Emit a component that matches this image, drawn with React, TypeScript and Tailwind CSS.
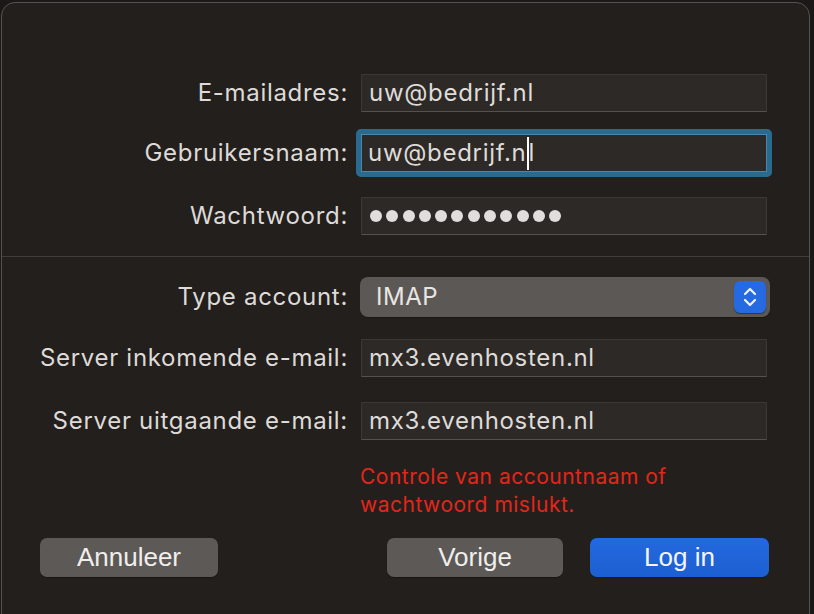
import React from 'react';

const font = { fontFamily: 'Inter, "Noto Sans", sans-serif' };

function Field({ children, focused }: { children: React.ReactNode; focused?: boolean }) {
  if (focused) {
    return (
      <div className="ml-[1px] rounded-[5px] bg-[#2b6a8f] p-[5px]">
        <div className="flex h-[38px] w-[406px] items-center border border-[#4f86a6] bg-[#2d2926] pl-[6px] text-[24px] tracking-[0.7px] text-[#dedbd8]">
          {children}
        </div>
      </div>
    );
  }
  return (
    <div className="ml-[13px] flex h-[38px] w-[406px] items-center border border-[#3b3734] border-b-[#55514d] bg-[#2d2926] pl-[7px] text-[24px] tracking-[0.7px] text-[#dedbd8]">
      {children}
    </div>
  );
}

function Row({ label, children, focused }: { label: string; children: React.ReactNode; focused?: boolean }) {
  return (
    <div className="flex items-center">
      <div className={`w-[346px] text-right text-[24px] tracking-[0.7px] text-[#dddad7] ${focused ? 'mr-[7px]' : ''}`}>{label}</div>
      {children}
    </div>
  );
}

export default function App() {
  return (
    <div className="h-[614px] w-[814px] overflow-hidden bg-[#1b1917] pl-[1px] pr-[4px] pt-[2px]" style={font}>
      <div className="flex h-[640px] flex-col rounded-[14px] border border-[#55524f] bg-[#231f1c]">
        <div className="flex flex-col pt-[71px]">
          <Row label="E-mailadres:">
            <Field>uw@bedrijf.nl</Field>
          </Row>
          <div className="mt-[17px]">
            <Row label="Gebruikersnaam:" focused>
              <Field focused>
                uw@bedrijf.n<span className="ml-[1px] mr-[-1px] inline-block h-[33px] w-[2px] bg-white" />l
              </Field>
            </Row>
          </div>
          <div className="mt-[20px]">
            <Row label="Wachtwoord:">
              <Field>
                <div className="flex gap-[4.3px] pl-[1px]">
                  {Array.from({ length: 12 }).map((_, i) => (
                    <span key={i} className="h-[12px] w-[12px] rounded-full bg-[#e0dedc]" />
                  ))}
                </div>
              </Field>
            </Row>
          </div>
        </div>

        <div className="mt-[21px] h-[1px] bg-[#3f3c39]" />

        <div className="flex flex-col pt-[20px]">
          <div className="flex items-center">
            <div className="w-[346px] text-right text-[24px] tracking-[0.7px] text-[#dddad7]">Type account:</div>
            <div className="ml-[12px] flex h-[40px] w-[410px] items-center justify-between rounded-[8px] bg-[#5c5855] pl-[16px] pr-[4px] text-[24px] tracking-[0.5px] text-[#e8e6e3] shadow-[0_1px_1px_rgba(0,0,0,0.3)]">
              <span>IMAP</span>
              <div className="flex h-[32px] w-[32px] items-center justify-center rounded-[6px] bg-[#256ae0] shadow-[0_1px_1px_rgba(0,0,0,0.4)]">
                <svg width="16" height="24" viewBox="0 0 16 24" fill="none" stroke="#eef3ff" strokeWidth="2.2" strokeLinecap="round" strokeLinejoin="round">
                  <path d="M3 9 L8 4 L13 9" />
                  <path d="M3 15 L8 20 L13 15" />
                </svg>
              </div>
            </div>
          </div>
          <div className="mt-[22px]">
            <Row label="Server inkomende e-mail:">
              <Field>mx3.evenhosten.nl</Field>
            </Row>
          </div>
          <div className="mt-[25px]">
            <Row label="Server uitgaande e-mail:">
              <Field>mx3.evenhosten.nl</Field>
            </Row>
          </div>
          <div className="ml-[358px] mt-[23px] text-[21px] leading-[28px] tracking-[0.5px] text-[#e3261b]">
            Controle van accountnaam of
            <br />
            wachtwoord mislukt.
          </div>
        </div>

        <div className="mt-[19px] flex items-center pl-[38px]" style={{ fontFamily: '"Liberation Sans", Arial, sans-serif' }}>
          <button className="h-[39px] w-[178px] rounded-[7px] bg-[#5c5956] text-[26px] text-[#f0eeec] shadow-[0_1px_1px_rgba(0,0,0,0.3)]">
            Annuleer
          </button>
          <button className="ml-[169px] h-[39px] w-[176px] rounded-[7px] bg-[#5c5956] text-[26px] text-[#f0eeec] shadow-[0_1px_1px_rgba(0,0,0,0.3)]">
            Vorige
          </button>
          <button className="ml-[27px] h-[39px] w-[179px] rounded-[7px] bg-gradient-to-b from-[#2369de] to-[#1c5fd2] text-[26px] text-[#f4f6fb] shadow-[0_1px_1px_rgba(0,0,0,0.3)]">
            Log in
          </button>
        </div>
      </div>
    </div>
  );
}
